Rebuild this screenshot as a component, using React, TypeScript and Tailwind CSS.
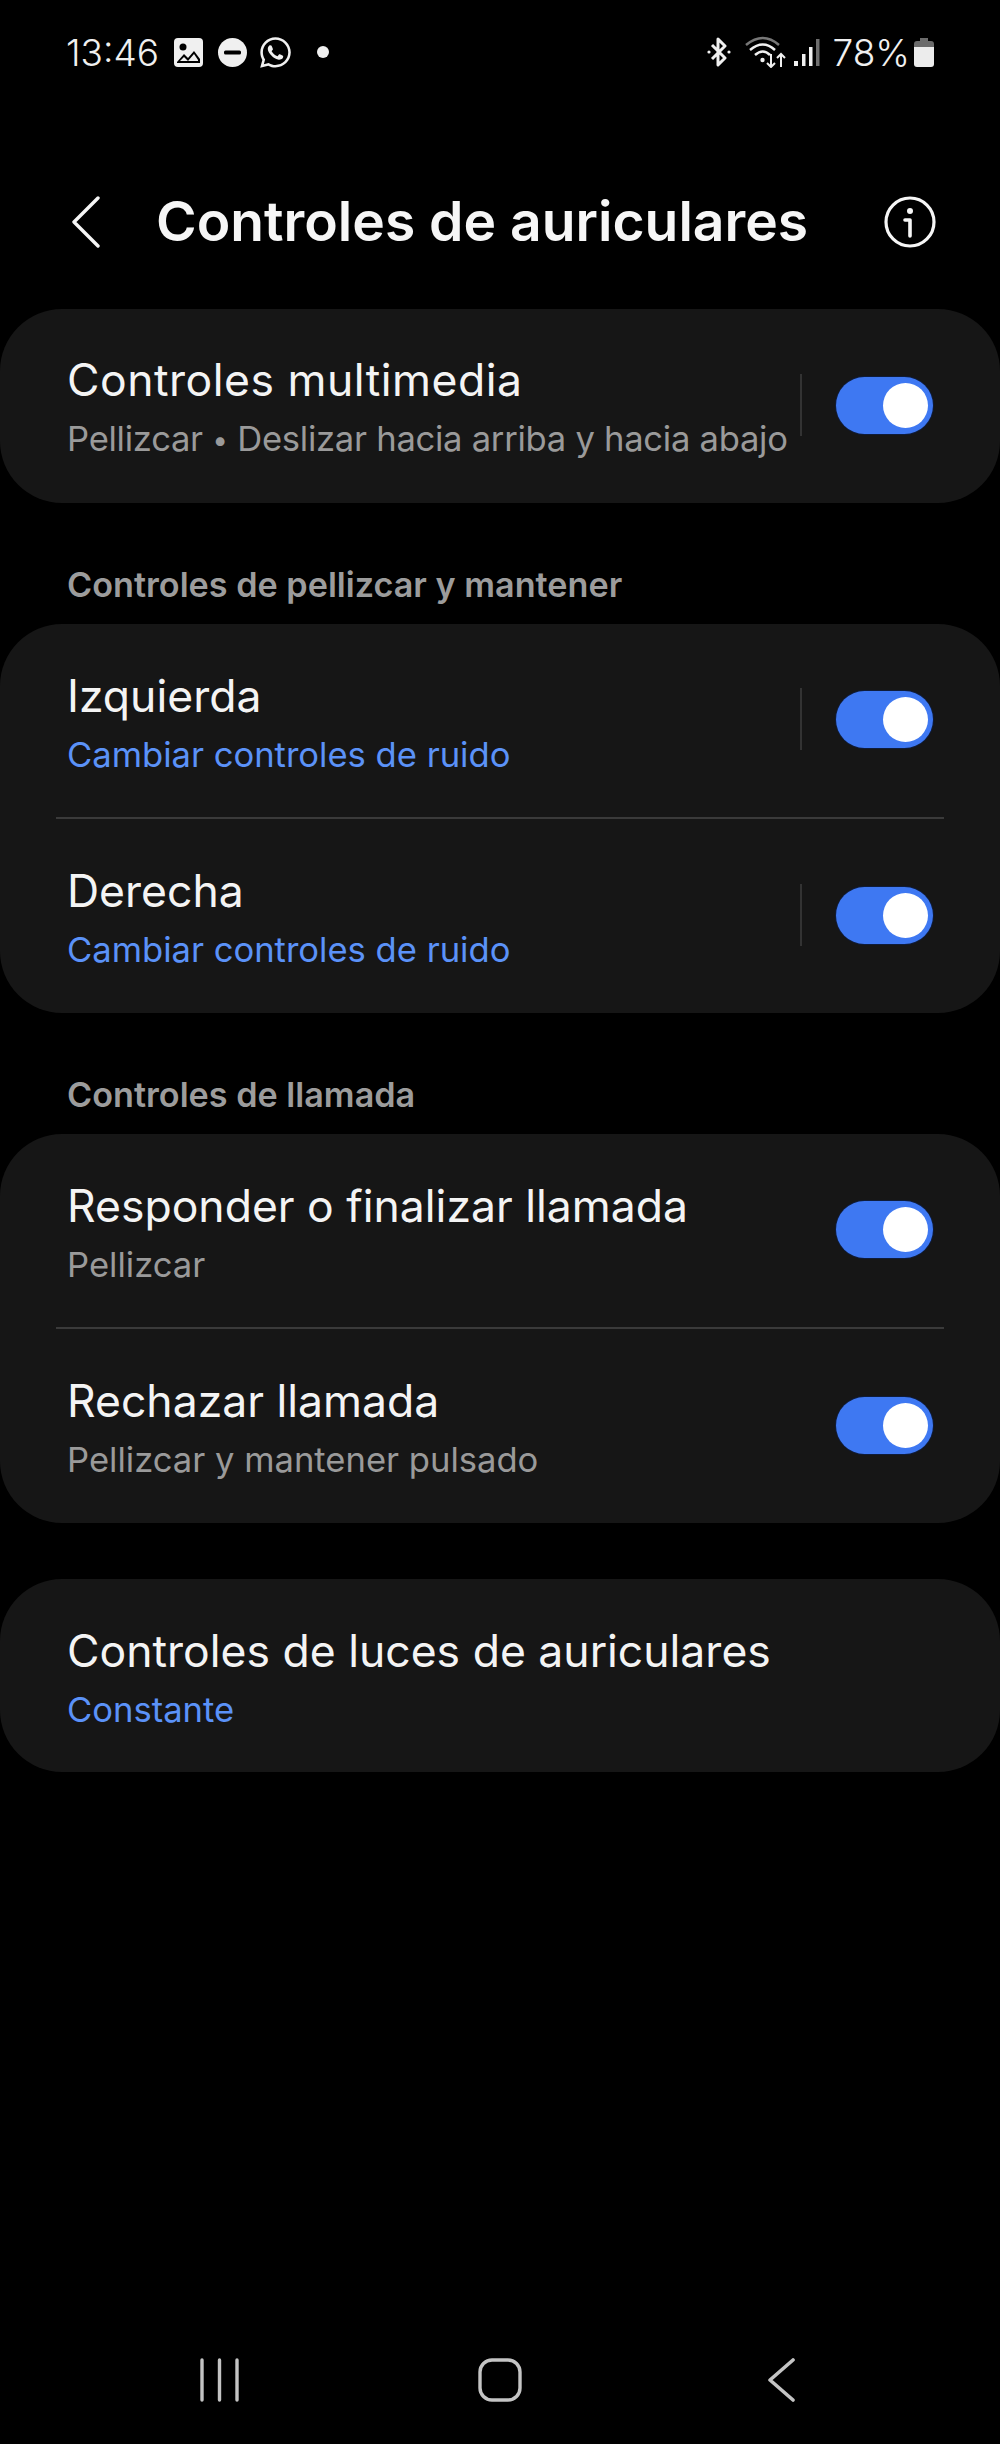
import { FaWhatsapp } from "react-icons/fa";

const font = "font-['Inter','Liberation_Sans',sans-serif]";

function Toggle() {
  return (
    <div className="w-[97px] h-[57px] rounded-full bg-[#3e78f2] shadow-[0_0_0_1px_#0f1c3a] flex items-center justify-end pr-[5px] shrink-0">
      <div className="w-[45px] h-[45px] rounded-full bg-white" />
    </div>
  );
}

function Row({
  title,
  sub,
  blue,
  toggle,
  split,
  wide,
}: {
  title: string;
  sub: React.ReactNode;
  blue?: boolean;
  toggle?: boolean;
  split?: boolean;
  wide?: boolean;
}) {
  return (
    <div className="h-[193.5px] pl-[67px] pr-[67px] flex items-center">
      <div className="flex-1 min-w-0 mt-[6px]">
        <div className={`text-[44.5px] leading-[57px] mb-[4px] text-[#f4f4f4] ${wide ? "tracking-[0.5px]" : ""}`}>{title}</div>
        <div className={`text-[34.6px] leading-[50px] whitespace-nowrap ${blue ? "text-[#5b92f8]" : "text-[#9a9a9a]"}`}>{sub}</div>
      </div>
      {split && <div className="w-[2px] h-[62px] bg-[#333333] mr-[34px] -mt-[2px]" />}
      {toggle && (
        <div className="-mt-[1px]">
          <Toggle />
        </div>
      )}
    </div>
  );
}

function Card({ children }: { children: React.ReactNode }) {
  return <div className="bg-[#161616] rounded-[62px]">{children}</div>;
}

function Divider() {
  return <div className="h-[2px] mx-[56px] bg-[#3a3a3a]" />;
}

function Heading({ children }: { children: string }) {
  return (
    <div className="h-[121px] pl-[67px] pt-[62px] text-[34.2px] leading-[40px] font-semibold text-[#9c9c9c]">{children}</div>
  );
}

function StatusBar() {
  return (
    <div className="h-[104px] px-[66px] flex items-center justify-between text-[#f0f0f0]">
      <div className="flex items-center">
        <span className="text-[37px] leading-none font-light w-[108px]">13:46</span>
        <svg width="29" height="29" viewBox="0 0 29 29" className="mr-[15px]">
          <rect x="0" y="0" width="29" height="29" rx="4" fill="#f0f0f0" />
          <circle cx="9" cy="9" r="3.5" fill="#000" />
          <path d="M3 24 L10 16 L14 20 L20 13 L26 21 L26 25 L3 25 Z" fill="#000" />
          <path d="M6 23 L10 19 L14 23 L20 16 L24 22 L24 23 Z" fill="#f0f0f0" />
        </svg>
        <svg width="29" height="29" viewBox="0 0 29 29" className="mr-[11px]">
          <circle cx="14.5" cy="14.5" r="14.5" fill="#f0f0f0" />
          <rect x="6" y="12.5" width="17" height="4" rx="1.5" fill="#000" />
        </svg>
        <FaWhatsapp className="text-[35px] mr-[24px]" />
        <div className="w-[12px] h-[12px] rounded-full bg-[#f0f0f0]" />
      </div>
      <div className="flex items-center">
        <svg width="26" height="30" viewBox="0 0 26 30" fill="none" stroke="#f0f0f0" strokeWidth="3" className="mr-[13px]">
          <path d="M6 8 L19 21 L12 28 L12 2 L19 9 L6 22" strokeLinejoin="round" />
          <circle cx="3" cy="15" r="1.6" fill="#f0f0f0" stroke="none" />
          <circle cx="23" cy="15" r="1.6" fill="#f0f0f0" stroke="none" />
        </svg>
        <svg width="42" height="32" viewBox="0 0 42 32" fill="none" className="mr-[6px]">
          <path d="M1 9 Q18 -5 34 9" stroke="#777" strokeWidth="2.5" />
          <path d="M5 14 Q18 3 30 14" stroke="#f0f0f0" strokeWidth="2.5" />
          <path d="M10 19 Q18 12 25 19" stroke="#f0f0f0" strokeWidth="2.5" />
          <circle cx="17.5" cy="24" r="2.2" fill="#f0f0f0" />
          <path d="M26 18 L26 31 M22 27 L26 31 L30 27" stroke="#f0f0f0" strokeWidth="2" />
          <path d="M36 31 L36 18 M32 22 L36 18 L40 22" stroke="#f0f0f0" strokeWidth="2" />
        </svg>
        <svg width="27" height="27" viewBox="0 0 27 27" className="mr-[13px]">
          <rect x="1" y="22" width="4" height="5" fill="#f0f0f0" />
          <rect x="9" y="15" width="3.5" height="12" fill="#f0f0f0" />
          <rect x="16" y="8" width="3.5" height="19" fill="#f0f0f0" />
          <rect x="23" y="0" width="3.5" height="27" fill="#6e6e6e" />
        </svg>
        <span className="text-[37px] leading-none font-light mr-[4px]">78%</span>
        <svg width="20" height="29" viewBox="0 0 20 29">
          <path d="M6 0 H14 V3 H17 Q20 3 20 6 V10 H0 V6 Q0 3 3 3 H6 Z" fill="#6b6b6b" />
          <path d="M0 9 H20 V26 Q20 29 17 29 H3 Q0 29 0 26 Z" fill="#ececec" />
        </svg>
      </div>
    </div>
  );
}

function Header() {
  return (
    <div className="h-[205px] pl-[72px] pr-[64px] pt-[30px] flex items-center text-white">
      <svg width="28" height="52" viewBox="0 0 28 52" fill="none" stroke="#f6f6f6" strokeWidth="3.4" strokeLinecap="round" strokeLinejoin="round" className="mr-[56px]">
        <path d="M26 2 L2 26 L26 50" />
      </svg>
      <h1 className="flex-1 text-[55.2px] leading-none font-semibold whitespace-nowrap text-[#f6f6f6]">Controles de auriculares</h1>
      <svg width="52" height="52" viewBox="0 0 52 52" fill="none" stroke="#f6f6f6">
        <circle cx="26" cy="26" r="24" strokeWidth="3.2" />
        <circle cx="26" cy="15" r="3" fill="#f6f6f6" stroke="none" />
        <path d="M21 24 H26 V40" strokeWidth="3.6" strokeLinecap="round" strokeLinejoin="round" />
      </svg>
    </div>
  );
}

function NavBar() {
  return (
    <div className="h-[86px] pl-[200px] flex items-start">
      <svg width="39" height="44" viewBox="0 0 39 44" stroke="#c4c4c4" strokeWidth="3.4" strokeLinecap="round" className="mr-[239px] shrink-0">
        <path d="M2 2 V42 M19.5 2 V42 M37 2 V42" />
      </svg>
      <svg width="44" height="44" viewBox="0 0 44 44" fill="none" stroke="#c4c4c4" strokeWidth="3.4" className="mr-[246px] shrink-0">
        <rect x="2" y="2" width="40" height="40" rx="12" />
      </svg>
      <svg width="28" height="44" viewBox="0 0 28 44" fill="none" stroke="#c4c4c4" strokeWidth="3.6" strokeLinecap="round" strokeLinejoin="round" className="shrink-0">
        <path d="M25 2 L2 22 L25 42" />
      </svg>
    </div>
  );
}

export default function App() {
  return (
    <div className={`${font} w-[1000px] h-[2444px] bg-black flex flex-col overflow-hidden`}>
      <StatusBar />
      <Header />
      <Card>
        <Row
          wide
          title="Controles multimedia"
          sub={
            <span className="tracking-[-0.27px]">
              Pellizcar <span className="text-[28px] align-[1px]">•</span> Deslizar hacia arriba y hacia abajo
            </span>
          }
          toggle
          split
        />
      </Card>
      <Heading>Controles de pellizcar y mantener</Heading>
      <Card>
        <Row title="Izquierda" sub="Cambiar controles de ruido" blue toggle split />
        <Divider />
        <Row title="Derecha" sub="Cambiar controles de ruido" blue toggle split />
      </Card>
      <Heading>Controles de llamada</Heading>
      <Card>
        <Row title="Responder o finalizar llamada" sub="Pellizcar" toggle />
        <Divider />
        <Row title="Rechazar llamada" sub="Pellizcar y mantener pulsado" toggle />
      </Card>
      <div className="h-[56px]" />
      <Card>
        <Row title="Controles de luces de auriculares" sub="Constante" blue />
      </Card>
      <div className="flex-1" />
      <NavBar />
    </div>
  );
}
